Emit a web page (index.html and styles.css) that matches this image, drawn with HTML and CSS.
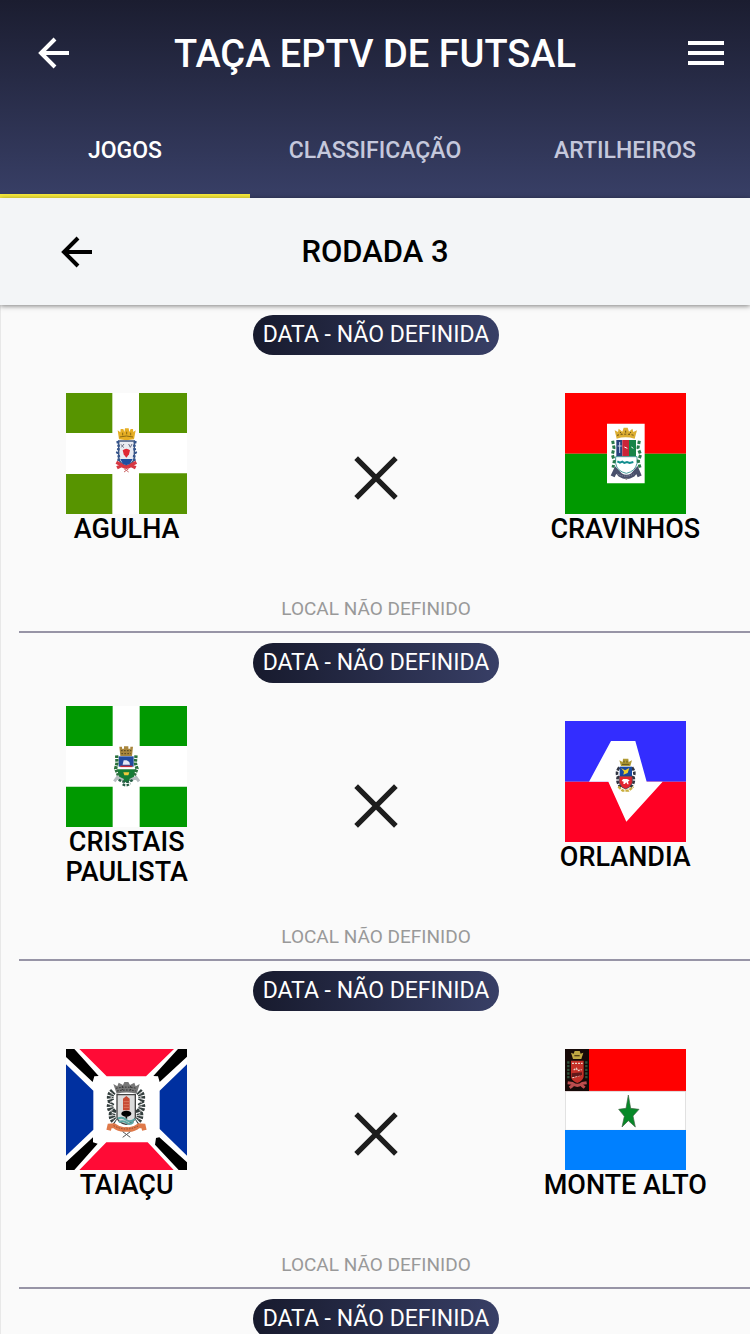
FILE: index.html
```html
<!DOCTYPE html>
<html lang="pt-BR">
<head>
<meta charset="utf-8">
<meta name="viewport" content="width=device-width, initial-scale=1">
<title>Taça EPTV de Futsal</title>
<link rel="stylesheet" href="styles.css">
</head>
<body>
<svg class="defs" aria-hidden="true">
  <symbol id="back" viewBox="0 0 32 32"><path d="M31 16H3M17 2 3 16l14 14" fill="none" stroke="currentColor" stroke-width="4"/></symbol>
  <symbol id="versus" viewBox="0 0 44 44"><path d="M3 3l38 38M41 3 3 41" fill="none" stroke="currentColor" stroke-width="5"/></symbol>
</svg>
<header class="app-header">
  <div class="title-bar">
    <button class="icon-button" aria-label="Voltar"><svg class="arrow"><use href="#back"/></svg></button>
    <h1 class="title">TAÇA EPTV DE FUTSAL</h1>
    <button class="icon-button" aria-label="Menu"><svg class="menu" viewBox="0 0 36 24"><path d="M0 2h36M0 12h36M0 22h36" stroke="currentColor" stroke-width="4"/></svg></button>
  </div>
  <nav class="tabs">
    <button class="tab active">JOGOS</button>
    <button class="tab">CLASSIFICAÇÃO</button>
    <button class="tab">ARTILHEIROS</button>
  </nav>
</header>
<section class="round">
  <button class="round-back" aria-label="Rodada anterior"><svg class="arrow"><use href="#back"/></svg></button>
  <h2 class="round-title">RODADA 3</h2>
</section>
<main class="matches">
  <article class="match">
    <p class="date">DATA - NÃO DEFINIDA</p>
    <div class="teams">
      <div class="team">
        <svg class="flag" viewBox="0 0 363 363" role="img" aria-label="Agulha">
          <path fill="#fff" d="M0 0h363v363H0z"/>
          <path fill="#579400" d="M0 0h139v120H0zM219 0h144v120H219zM0 243h139v120H0zM219 241h144v122H219z"/>
          <path fill="#e6ae24" d="M155 112l8 6 1-10h8l3 9 2-11h11l2 11 4-9h7l1 9 7-5-5 27q-23 5-45 0z"/>
          <path stroke="#8c6a12" stroke-width="3" fill="none" d="M161 132q20-6 40 0M170 119v8M182 116v8M194 119v8"/>
          <path fill="#e9ebf2" stroke="#40567d" stroke-width="4" d="M158 144h47v50q-2 18-24 25-21-7-23-25z"/>
          <path fill="none" stroke="#35558d" stroke-width="8" stroke-dasharray="7 4" d="M154 144q8 18 0 34 8 12 2 30M209 144q-8 18 0 34-8 12-2 30"/>
          <path fill="#1e4fa0" d="M163 198h37l-8 14-11 5-11-5z"/>
          <path fill="#e02834" d="M170 172q11-9 22 0l-3 12-8 10-8-10z"/>
          <path stroke="#6d7185" stroke-width="3" d="M165 154l8 10M174 153l-8 10M188 153l5 10M198 153l-5 10"/>
          <path fill="none" stroke="#d63843" stroke-width="10" d="M151 208l12 6q18 17 36 0l12-6M153 224l12-6M209 224l-12-6"/>
          <path stroke="#c66" stroke-width="3" fill="none" d="M174 237l14-10M188 237l-14-10"/>
        </svg>
        <span class="name">AGULHA</span>
      </div>
      <svg class="versus"><use href="#versus"/></svg>
      <div class="team">
        <svg class="flag" viewBox="0 0 363 363" role="img" aria-label="Cravinhos">
          <path fill="#f00" d="M0 0h363v182H0z"/><path fill="#090" d="M0 182h363v181H0z"/>
          <path fill="#fff" d="M126 92h113v179H126z"/>
          <path fill="#dcae32" d="M149 112l10 5 2-10 11 9 4-12h12l4 12 10-9 3 10 11-5-7 25q-28-8-54 0z"/>
          <path fill="none" stroke="#675018" stroke-width="3" stroke-dasharray="6 5" d="M156 127q26-7 51 0M165 117l6 7M182 113v7M198 117l-6 7"/>
          <path fill="#29417c" d="M154 141h18v50h-18z"/><path fill="#cb2438" d="M172 141h20v50h-20z"/><path fill="#178447" d="M192 141h21v50h-21z"/>
          <path stroke="#c9cfe8" stroke-width="3" d="M158 159h12M164 147v33"/>
          <path stroke="#fff" stroke-width="3" d="M178 162l9 4M199 162l6 4"/>
          <path fill="#fff" stroke="#4a9b9b" stroke-width="3" d="M152 191h64v20q-5 24-32 30-28-6-32-30z"/>
          <path fill="none" stroke="#138d8e" stroke-width="6" d="M157 205l8 4 7-3 6 4 8-3 8 3 11-3"/>
          <path fill="none" stroke="#277a4b" stroke-width="9" stroke-dasharray="10 5" d="M143 143l4 22-5 20 6 19-4 20M223 143l-4 22 8 20-7 19 5 20"/>
          <path fill="none" stroke="#49506b" stroke-width="13" d="M143 250l9-19 14 15q18 12 37 0l13-15 8 19"/>
          <path fill="none" stroke="#8a8fa3" stroke-width="3" stroke-dasharray="4 3" d="M157 243q25 13 49 0"/><path fill="#888" d="M178 256h12l-6 5z"/>
        </svg>
        <span class="name">CRAVINHOS</span>
      </div>
    </div>
    <p class="venue">LOCAL NÃO DEFINIDO</p>
    <hr class="rule">
  </article>
  <article class="match">
    <p class="date">DATA - NÃO DEFINIDA</p>
    <div class="teams">
      <div class="team">
        <svg class="flag" viewBox="0 0 363 363" role="img" aria-label="Cristais Paulista">
          <path fill="#fff" d="M0 0h363v363H0z"/>
          <path fill="#090" d="M0 0h140v120H0zM221 0h142v120H221zM0 242h140v121H0zM221 242h142v121H221z"/>
          <path fill="#a9863d" d="M160 122h8v6h6v-7h13v7h6v-6h8l-3 28h-35z"/>
          <path fill="none" stroke="#55451f" stroke-width="3" stroke-dasharray="5 4" d="M165 134h31M166 143h29"/>
          <path fill="#234a9f" d="M158 151h45v31h-45z"/><path fill="#e4e9f5" d="M170 175l3-12h9l8 5 2 8h-22z"/>
          <path fill="#c52d35" d="M163 179h36v5h-36z"/><path fill="#fff" d="M162 184h37v6h-37z"/>
          <path fill="#167d36" d="M154 190h54l-5 26-22 14-22-14z"/><path fill="#f1ca3c" d="M172 199h18l-3 9h-12z"/>
          <path fill="none" stroke="#2a713c" stroke-width="10" stroke-dasharray="8 3" d="M152 148l1 23-4 17 8 20M210 148l-2 23 5 17-8 20"/>
          <path fill="none" stroke="#b7bdc1" stroke-width="9" d="M145 226l9-12 18 9M219 226l-9-12-18 9"/>
          <path fill="none" stroke="#245c43" stroke-width="7" stroke-dasharray="8 4" d="M158 221q22 13 44 0M170 235q12 7 23-3"/>
        </svg>
        <span class="name">CRISTAIS PAULISTA</span>
      </div>
      <svg class="versus"><use href="#versus"/></svg>
      <div class="team">
        <svg class="flag" viewBox="0 0 363 363" role="img" aria-label="Orlandia">
          <path fill="#332dff" d="M0 0h363v182H0z"/><path fill="#ff0024" d="M0 182h363v181H0z"/>
          <path fill="#fff" d="M138 60h73l34 122h48L184 302l-54-120H72z"/>
          <path fill="#b19b35" d="M163 118l10 5 1-10h16l1 10 10-5-5 17h-28z"/><path stroke="#5f551d" stroke-width="3" d="M171 130h22M177 119v6M186 119v6"/>
          <path fill="none" stroke="#303442" stroke-width="8" stroke-dasharray="10 4" d="M163 139q-12 17-4 28-6 16 8 32M201 139q12 17 4 28 6 16-8 32"/>
          <path fill="#1848a1" d="M164 137h37v28h-37z"/><path fill="#f0cf2d" d="M168 141l12 7 13-7-5 15-13 5 2-9z"/>
          <path fill="#e32530" stroke="#343440" stroke-width="2" d="M163 166h39v20l-9 13-11 5-11-5-8-13z"/>
          <path fill="#fff" d="M170 180l4-6h12l8 4-5 4 2 8h-4l-3-6-5 5h-4l1-7z"/>
          <path fill="none" stroke="#caad3c" stroke-width="7" stroke-dasharray="10 3" d="M160 197l13 12h18l14-12"/>
        </svg>
        <span class="name">ORLANDIA</span>
      </div>
    </div>
    <p class="venue">LOCAL NÃO DEFINIDO</p>
    <hr class="rule">
  </article>
  <article class="match">
    <p class="date">DATA - NÃO DEFINIDA</p>
    <div class="teams">
      <div class="team">
        <svg class="flag" viewBox="0 0 363 363" role="img" aria-label="Taiaçu">
          <path fill="#fff" d="M0 0h363v363H0z"/>
          <path fill="#ff0b36" d="M40 0h284l-84 82H122zM121 280h124l78 83H40z"/>
          <path fill="#0030a0" d="M0 46l82 79v117L0 320zM363 46l-82 79v115l82 80z"/>
          <path d="M0 0h25l73 81-13 1-5 17L0 24zM363 0h-27l-74 81 14 1 5 17 82-76zM0 363h25l70-79-14-4v-15L0 340zM363 363h-25l-71-76 3-20 10-2 83 75z"/>
          <path fill="#777" d="M142 105l12 7 4-11 13 7 4-9h12l5 9 13-7 4 11 12-7-9 29q-31-7-60 0z"/>
          <path fill="none" stroke="#333" stroke-width="3" stroke-dasharray="5 4" d="M150 118q30-7 62 0M153 126q29-6 56 0M169 111v12M194 111v12"/>
          <path fill="none" stroke="#333e3d" stroke-width="20" stroke-dasharray="6 3" d="M142 127q-16 15-5 32-11 16 3 29-7 20 9 30M218 127q16 15 5 32 11 16-3 29 7 20-9 30"/>
          <path fill="none" stroke="#aaa" stroke-width="5" stroke-dasharray="5 8" d="M137 131l-3 39 8 41M223 131l3 39-8 41"/>
          <path fill="#dcdcdc" stroke="#444" stroke-width="4" d="M153 137h55v68q-4 17-28 21-23-4-27-21z"/>
          <path fill="#c74a33" d="M171 149l10-8 10 8v35h-20z"/><path stroke="#e58f73" stroke-width="2" d="M173 158h16M173 167h16M173 175h16"/>
          <ellipse cx="181" cy="194" rx="15" ry="9"/><path stroke="#111" stroke-width="5" d="M181 197v12"/>
          <path fill="none" stroke="#5aa7a3" stroke-width="6" d="M155 209q13-7 25 3t27-2M158 219q14-6 24 2t20-2"/>
          <path fill="none" stroke="#df7949" stroke-width="14" d="M128 244l3-13 13-1q17 14 37 11 21 3 37-11l14 1 3 13"/>
          <path stroke="#894b36" stroke-width="3" stroke-dasharray="4 4" fill="none" d="M143 230q37 20 76 0"/>
          <path fill="none" stroke="#555" stroke-width="3" d="M170 265l23-17M193 265l-23-17"/>
        </svg>
        <span class="name">TAIAÇU</span>
      </div>
      <svg class="versus"><use href="#versus"/></svg>
      <div class="team">
        <svg class="flag" viewBox="0 0 363 363" role="img" aria-label="Monte Alto">
          <path fill="#f00" d="M0 0h363v127H0z"/><path fill="#fff" stroke="#ccc" stroke-width="2" d="M1 127h361v117H1z"/><path fill="#0080ff" d="M0 243h363v120H0z"/>
          <path fill="#170a08" d="M0 0h72v126H0z"/>
          <path fill="#c0a743" d="M18 11l8 3 3-8h15l3 8 8-3-6 19H24z"/><path fill="#553f14" d="M28 18h16v4H28z"/>
          <path fill="none" stroke="#31513a" stroke-width="7" stroke-dasharray="7 4" d="M10 37v53M64 37v53"/>
          <path fill="#c43028" d="M18 35h38v49q-4 12-19 18-16-6-19-18z"/>
          <path stroke="#ead4ca" stroke-width="4" stroke-dasharray="6 3" fill="none" d="M21 43h32M26 63l8-5 4 7 12-3M22 86l13-4 14-4"/>
          <path fill="#61191a" d="M20 73l31-3v9l-31 6z"/>
          <path fill="none" stroke="#bd4d4e" stroke-width="9" d="M8 101l14 2q15 12 30 0l13-2M14 116l10-7M59 116l-9-7"/>
          <path fill="#078928" stroke="#406344" stroke-width="2" d="M190 138l7 40 25 3-18 20 7 33-21-19-19 19 7-32-17-21 22-3z"/>
        </svg>
        <span class="name">MONTE ALTO</span>
      </div>
    </div>
    <p class="venue">LOCAL NÃO DEFINIDO</p>
    <hr class="rule">
  </article>
  <article class="match">
    <p class="date">DATA - NÃO DEFINIDA</p>
  </article>
</main>
</body>
</html>
```
FILE: styles.css
```css
* {
  box-sizing: border-box;
}

body {
  margin: 0;
  height: 100vh;
  overflow: hidden;
  background: #fafafa;
  color: #000;
  font-family: Roboto, "Liberation Sans", sans-serif;
}

button {
  padding: 0;
  border: 0;
  background: none;
  color: inherit;
  font: inherit;
  cursor: pointer;
}

h1,
h2,
p {
  margin: 0;
}

svg {
  display: block;
}

.defs {
  display: none;
}

.app-header {
  background: linear-gradient(#1b1d30, #383f66);
  color: #fff;
}

.title-bar {
  display: grid;
  grid-template-columns: 88px 1fr 88px;
  align-items: center;
  height: 106px;
}

.icon-button {
  display: grid;
  place-items: center;
  height: 64px;
}

.title-bar .icon-button:first-child {
  padding-left: 20px;
}

.arrow {
  width: 32px;
  height: 32px;
}

.menu {
  width: 36px;
  height: 24px;
}

.title {
  padding-top: 2px;
  font-size: 38px;
  line-height: 48px;
  font-weight: 500;
  text-align: center;
  white-space: nowrap;
}

.tabs {
  display: grid;
  grid-template-columns: repeat(3, 1fr);
}

.tab {
  height: 92px;
  border-bottom: 4px solid transparent;
  color: #c5c8dc;
  font-size: 23px;
  font-weight: 500;
}

.tab.active {
  border-color: #f6e93b;
  color: #fff;
}

.round {
  position: relative;
  display: grid;
  grid-template-columns: 154px 1fr 154px;
  align-items: center;
  height: 107px;
  background: #f3f5f7;
  box-shadow: 0 1px 5px rgba(0, 0, 0, 0.5);
}

.round-back {
  display: grid;
  place-items: center;
  height: 64px;
}

.round-title {
  font-size: 31px;
  line-height: 40px;
  font-weight: 500;
  text-align: center;
}

.matches {
  padding-left: 1px;
  border-left: 1px solid #e8e8e8;
}

.match {
  display: flex;
  flex-direction: column;
  padding-top: 10px;
}

.date {
  align-self: center;
  padding: 0 10px;
  border-radius: 20px;
  background: linear-gradient(90deg, #171a2d, #383f66);
  color: #fff;
  font-size: 23px;
  line-height: 40px;
}

.teams {
  display: grid;
  grid-template-columns: repeat(3, 1fr);
  align-items: center;
  justify-items: center;
  min-height: 225px;
}

.team {
  display: flex;
  flex-direction: column;
  align-items: center;
  padding: 1px 24px 0;
}

.flag {
  width: 121px;
  height: 121px;
}

.name {
  font-size: 27px;
  line-height: 30px;
  font-weight: 500;
  text-align: center;
}

.versus {
  width: 46px;
  height: 46px;
  margin-top: 20px;
  color: #1d1d1d;
}

.venue {
  padding: 17px 0 10px;
  color: #999;
  font-size: 19px;
  line-height: 24px;
  text-align: center;
}

.rule {
  margin: 0 0 0 17px;
  border: 0;
  border-top: 2px solid #9794a6;
}
```
